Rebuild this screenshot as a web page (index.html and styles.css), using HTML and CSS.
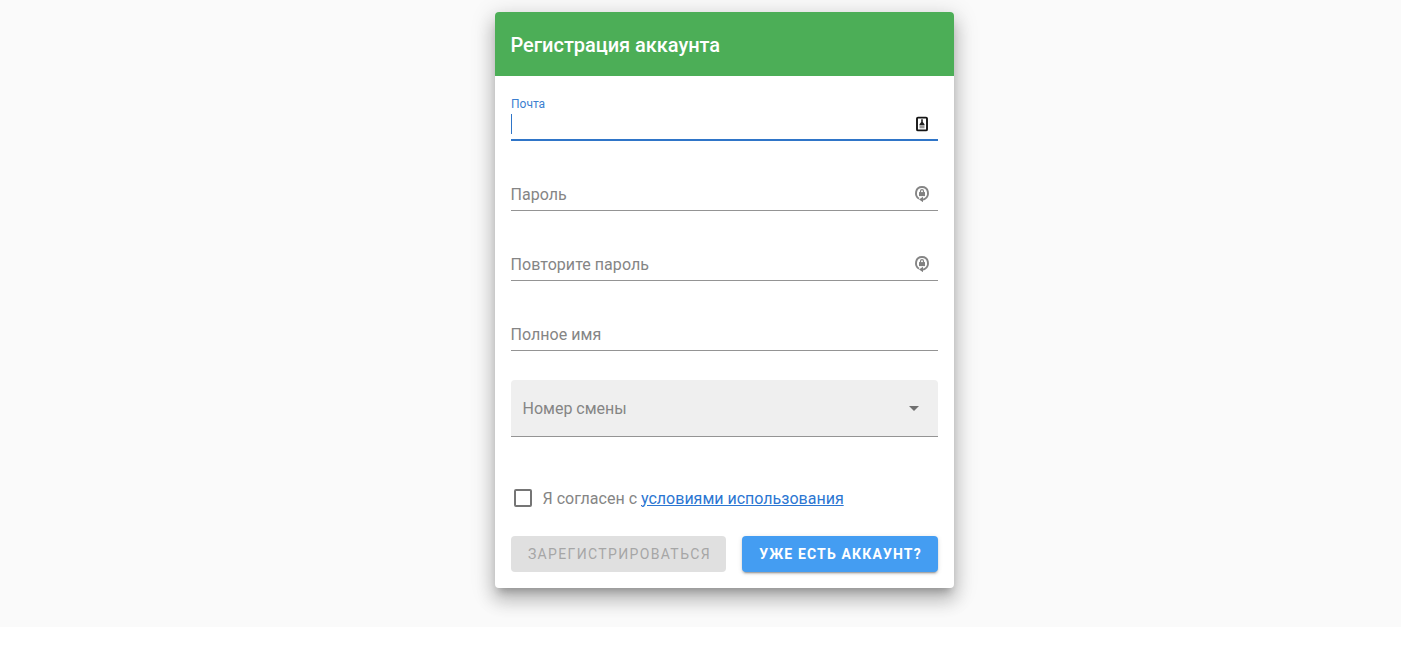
FILE: index.html
```html
<!DOCTYPE html>
<html lang="ru">
<head>
<meta charset="utf-8">
<title>Регистрация аккаунта</title>
<link rel="stylesheet" href="styles.css">
</head>
<body>
<main class="page">
  <form class="card">
    <header class="card-header"><h1 class="title">Регистрация аккаунта</h1></header>
    <div class="fields">
      <div class="field field-active">
        <label class="float-label">Почта</label>
        <div class="field-row">
          <span class="caret"></span>
          <svg class="icon" viewBox="0 0 16 16"><rect x="3" y="1.6" width="10" height="12.8" rx="1" fill="none" stroke="#151515" stroke-width="1.9"/><path d="M7.2 3.3h1.6v2.8l1.7 2.2v1h-5v-1l1.7-2.2z" fill="#222"/><path d="M5.5 9.3h5v3h-5z" fill="#999"/></svg>
        </div>
      </div>
      <div class="field">
        <div class="field-row"><label class="label">Пароль</label>
          <svg class="icon" viewBox="0 0 16 16"><path d="M5 12.8C.2 9.8 1.2 1 8 1s7.8 8.8 3 11.8Q9.7 13.8 7.5 13.5" fill="none" stroke="#858585" stroke-width="1.9"/><path d="M9 10.8v5.4l-4-2.7z" fill="#808080"/><path d="M6.5 7V5.2a1.5 1.5 0 0 1 3 0V7" fill="none" stroke="#808080" stroke-width="1.2"/><rect x="5" y="6.1" width="6" height="4" fill="#808080"/></svg>
        </div>
      </div>
      <div class="field">
        <div class="field-row"><label class="label">Повторите пароль</label>
          <svg class="icon" viewBox="0 0 16 16"><path d="M5 12.8C.2 9.8 1.2 1 8 1s7.8 8.8 3 11.8Q9.7 13.8 7.5 13.5" fill="none" stroke="#858585" stroke-width="1.9"/><path d="M9 10.8v5.4l-4-2.7z" fill="#808080"/><path d="M6.5 7V5.2a1.5 1.5 0 0 1 3 0V7" fill="none" stroke="#808080" stroke-width="1.2"/><rect x="5" y="6.1" width="6" height="4" fill="#808080"/></svg>
        </div>
      </div>
      <div class="field"><div class="field-row"><label class="label">Полное имя</label></div></div>
      <div class="select"><span class="label">Номер смены</span><svg class="arrow" viewBox="0 0 24 24"><path d="M7 10l5 5 5-5z" fill="#707070"/></svg></div>
    </div>
    <div class="terms"><svg class="checkbox" viewBox="0 0 24 24"><path fill="#757575" d="M19 3H5a2 2 0 0 0-2 2v14a2 2 0 0 0 2 2h14a2 2 0 0 0 2-2V5a2 2 0 0 0-2-2m0 2v14H5V5z"/></svg><span class="label terms-label">Я согласен с <a class="link" href="#">условиями использования</a></span></div>
    <div class="actions"><button class="button button-disabled" type="button" disabled>Зарегистрироваться</button><button class="button button-login" type="button">Уже есть аккаунт?</button></div>
  </form>
</main>
</body>
</html>
```
FILE: styles.css
```css
body { margin: 0; background: #fff; font-family: Roboto, sans-serif; }
* { box-sizing: border-box; }
.page { height: 627px; padding: 12px 0 0 495px; background: #fafafa; }
.card { width: 459px; height: 576px; background: #fff; border-radius: 4px; box-shadow: 0 7px 8px -4px rgba(0,0,0,.24), 0 12px 17px 2px rgba(0,0,0,.16), 0 5px 22px 4px rgba(0,0,0,.13); }
.card-header { display: flex; align-items: center; height: 64px; padding: 2px 15.5px 0; background: #4cae57; border-radius: 4px 4px 0 0; color: #fff; }
.title { margin: 0; font-size: 20px; font-weight: 500; line-height: 28px; letter-spacing: -.04px; }
.fields { padding: 0 16px; }
.field { display: flex; flex-direction: column; justify-content: flex-end; height: 70px; border-bottom: 1px solid #949494; }
.field-active { height: 65px; border-bottom: 2px solid #2f75c8; }
.float-label { font-size: 12px; line-height: 14px; color: #3c7fd0; }
.field-row { display: flex; align-items: center; justify-content: space-between; height: 32px; padding-right: 8px; }
.field-row .label { padding-top: 2px; margin-left: -.5px; }
.field-active .field-row { height: 28px; padding-bottom: 2px; }
.label { font-size: 16px; line-height: 20px; letter-spacing: .05px; color: #858585; }
.caret { width: 1px; height: 20px; background: #2f75c8; }
.icon { width: 16px; height: 16px; }
.select { display: flex; align-items: center; justify-content: space-between; height: 57px; margin-top: 29px; padding: 0 12px 0 11.5px; background: #efefef; border-bottom: 1px solid #949494; border-radius: 4px 4px 0 0; }
.select .label { padding-top: 1px; letter-spacing: 0; }
.arrow { width: 24px; height: 24px; }
.terms { display: flex; align-items: center; gap: 8px; height: 24px; margin-top: 49px; padding: 0 15.5px; }
.terms-label { padding-top: 1px; letter-spacing: .005px; }
.checkbox { width: 24px; height: 24px; }
.link { color: #2b76d2; }
.actions { display: flex; gap: 16px; margin-top: 26px; padding: 0 16px; }
.button { height: 36px; padding: 0; border: 0; border-radius: 4px; font: 500 14px/20px Roboto, sans-serif; letter-spacing: 1.25px; text-transform: uppercase; white-space: nowrap; }
.button-disabled { width: 215px; padding-left: 2px; background: #e0e0e0; color: #a6a6a6; font-weight: 400; letter-spacing: 1.35px; }
.button-login { width: 196px; padding-left: 1px; background: #449df2; color: #fff; font-weight: 700; letter-spacing: 1.15px; box-shadow: 0 3px 1px -2px rgba(0,0,0,.2), 0 2px 2px rgba(0,0,0,.14), 0 1px 5px rgba(0,0,0,.12); }
```
